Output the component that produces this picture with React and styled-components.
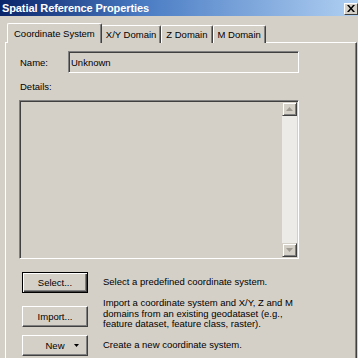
import React from "react";
import styled, { createGlobalStyle } from "styled-components";

const GlobalStyle = createGlobalStyle`
  html, body {
    margin: 0;
    padding: 0;
    background: #d4d0c8;
    overflow: hidden;
  }
  body {
    font-family: "Liberation Sans", Arial, sans-serif;
    font-size: 9.5px;
    color: #000;
  }
`;

export default function App() {
  return (
    <Window>
      <GlobalStyle />
      <TitleBar>
        <TitleText>Spatial Reference Properties</TitleText>
        <CloseButton>
          <svg width="8" height="7" viewBox="0 0 8 7">
            <path d="M0 0h2l2 2.5L6 0h2L5 3.5 8 7H6L4 4.5 2 7H0l3-3.5z" fill="#000" />
          </svg>
        </CloseButton>
      </TitleBar>
      <Body>
        <TabStrip>
          <Tab active>Coordinate System</Tab>
          <Tab>X/Y Domain</Tab>
          <Tab>Z Domain</Tab>
          <Tab>M Domain</Tab>
        </TabStrip>
        <Panel>
          <NameRow>
            <Label>Name:</Label>
            <Field>Unknown</Field>
          </NameRow>
          <DetailsLabel>Details:</DetailsLabel>
          <DetailsBox>
            <DetailsText />
            <ScrollBar>
              <ArrowButton>
                <svg width="7" height="4" viewBox="0 0 7 4">
                  <path d="M3.5 0L7 4H0z" fill="#a09c94" />
                </svg>
              </ArrowButton>
              <Track />
              <ArrowButton>
                <svg width="7" height="4" viewBox="0 0 7 4">
                  <path d="M0 0h7L3.5 4z" fill="#a09c94" />
                </svg>
              </ArrowButton>
            </ScrollBar>
          </DetailsBox>
          <Actions>
            <ActionRow>
              <Button isDefault>Select...</Button>
              <ActionText>Select a predefined coordinate system.</ActionText>
            </ActionRow>
            <ActionRow offset={6}>
              <Button>Import...</Button>
              <ActionText>
                Import a coordinate system and X/Y, Z and M
                <br />
                domains from an existing geodataset (e.g.,
                <br />
                feature dataset, feature class, raster).
              </ActionText>
            </ActionRow>
            <ActionRow>
              <Button>
                New
                <DropArrow>
                  <svg width="5" height="3" viewBox="0 0 5 3">
                    <path d="M0 0h5L2.5 3z" fill="#000" />
                  </svg>
                </DropArrow>
              </Button>
              <ActionText>Create a new coordinate system.</ActionText>
            </ActionRow>
          </Actions>
        </Panel>
      </Body>
    </Window>
  );
}

const Window = styled.div`
  width: 358px;
  height: 358px;
  display: flex;
  flex-direction: column;
  overflow: hidden;
`;

const TitleBar = styled.div`
  height: 16px;
  display: flex;
  align-items: center;
  justify-content: space-between;
  padding: 0 0 0 2px;
  background: linear-gradient(to right, #0a246a 0%, #4a7cc4 40%, #b0d0f2 100%);
`;

const TitleText = styled.span`
  color: #fff;
  font-weight: bold;
  font-size: 11px;
  letter-spacing: -0.1px;
`;

const CloseButton = styled.div`
  width: 14px;
  height: 12px;
  margin-right: 0;
  margin-top: 1px;
  display: flex;
  align-items: center;
  justify-content: center;
  background: #d4d0c8;
  border: 1px solid;
  border-color: #fff #404040 #404040 #fff;
  box-sizing: border-box;
`;

const Body = styled.div`
  flex: 1;
  display: flex;
  flex-direction: column;
  padding: 7px 1px 0 5px;
`;

const TabStrip = styled.div`
  display: flex;
  align-items: flex-end;
  padding-left: 3px;
  height: 20px;
  position: relative;
  z-index: 1;
  margin-bottom: -1px;
`;

const Tab = styled.div`
  height: ${(p) => (p.active ? "20px" : "18px")};
  padding: 0 ${(p) => (p.active ? "6px" : "4px")};
  margin: 0 ${(p) => (p.active ? "-1px" : "0")};
  display: flex;
  align-items: center;
  box-sizing: border-box;
  background: #d4d0c8;
  border-left: 1px solid #fff;
  border-top: 1px solid #fff;
  border-right: 1px solid #404040;
  border-top-left-radius: 2px;
  border-top-right-radius: 2px;
  box-shadow: inset -1px 0 0 #808080;
  ${(p) => p.active && "z-index: 2;"}
`;

const Panel = styled.div`
  flex: 1;
  display: flex;
  flex-direction: column;
  border-left: 1px solid #fff;
  border-top: 1px solid #fff;
  border-right: 1px solid #404040;
  box-shadow: inset -1px 0 0 #808080;
  padding: 8px 0 0 13px;
`;

const NameRow = styled.div`
  display: flex;
  align-items: center;
  height: 22px;
`;

const Label = styled.span`
  width: 48px;
  padding-left: 1px;
`;

const Field = styled.div`
  width: 231px;
  height: 22px;
  box-sizing: border-box;
  display: flex;
  align-items: center;
  padding-left: 2px;
  border: 1px solid;
  border-color: #808080 #fff #fff #808080;
  box-shadow: inset 1px 1px 0 #404040, inset -1px -1px 0 #d4d0c8;
`;

const DetailsLabel = styled.div`
  margin-top: 8px;
  padding-left: 1px;
  height: 12px;
  line-height: 12px;
`;

const DetailsBox = styled.div`
  margin-top: 7px;
  width: 280px;
  height: 159px;
  box-sizing: border-box;
  display: flex;
  border: 1px solid;
  border-color: #808080 #fff #fff #808080;
  box-shadow: inset 1px 1px 0 #404040, inset -1px -1px 0 #d4d0c8;
  padding: 1px;
`;

const DetailsText = styled.div`
  flex: 1;
`;

const ScrollBar = styled.div`
  width: 15px;
  display: flex;
  flex-direction: column;
  background: #ecebe8;
`;

const ArrowButton = styled.div`
  height: 14px;
  box-sizing: border-box;
  display: flex;
  align-items: center;
  justify-content: center;
  background: #d4d0c8;
  border: 1px solid;
  border-color: #d4d0c8 #404040 #404040 #d4d0c8;
  box-shadow: inset 1px 1px 0 #fff, inset -1px -1px 0 #808080;
`;

const Track = styled.div`
  flex: 1;
`;

const Actions = styled.div`
  display: flex;
  flex-direction: column;
  gap: 5px;
  margin-top: 13px;
`;

const ActionRow = styled.div`
  display: flex;
  align-items: center;
  padding-left: 3px;
  gap: 15px;
  & > div:first-child {
    margin-top: ${(p) => p.offset || 0}px;
  }
`;

const Button = styled.div`
  width: 66px;
  height: 21px;
  flex-shrink: 0;
  box-sizing: border-box;
  display: flex;
  align-items: center;
  justify-content: center;
  position: relative;
  background: #d4d0c8;
  border: 1px solid;
  border-color: ${(p) => (p.isDefault ? "#000" : "#fff #404040 #404040 #fff")};
  box-shadow: ${(p) =>
    p.isDefault
      ? "inset 1px 1px 0 #fff, inset -1px -1px 0 #404040, inset -2px -2px 0 #808080"
      : "inset -1px -1px 0 #808080"};
`;

const DropArrow = styled.span`
  position: absolute;
  right: 8px;
  top: 8px;
  display: flex;
`;

const ActionText = styled.div`
  line-height: 10.5px;
`;
